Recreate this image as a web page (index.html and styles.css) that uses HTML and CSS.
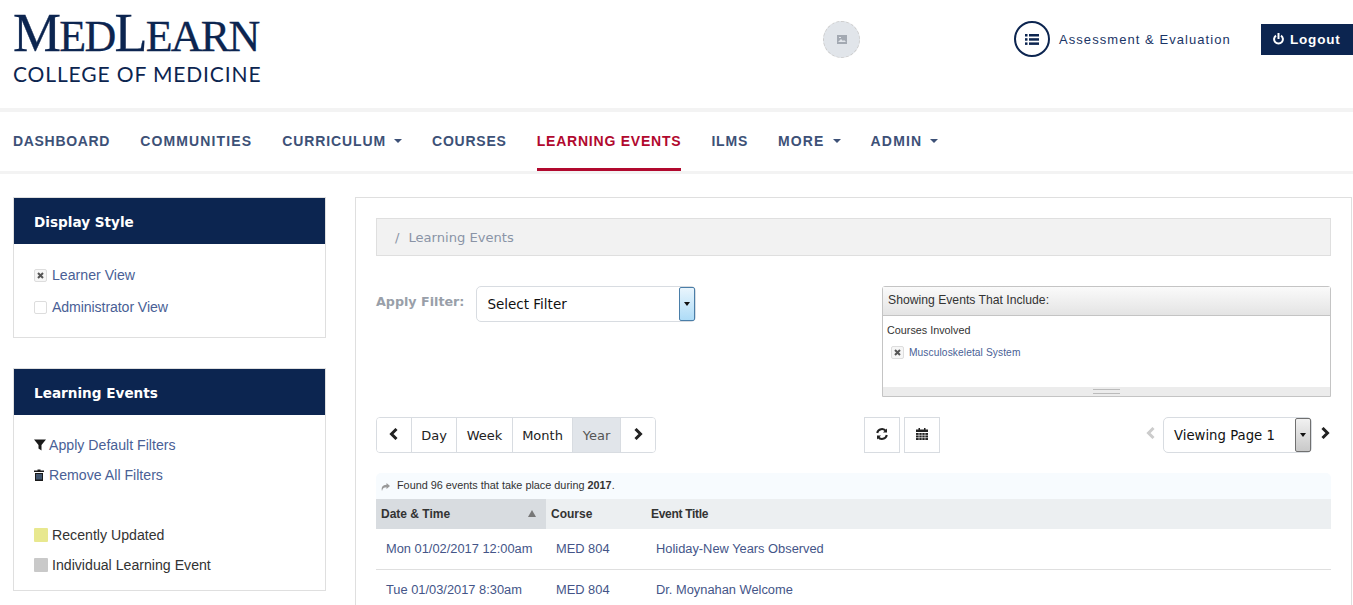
FILE: index.html
```html
<!DOCTYPE html>
<html lang="en">
<head>
<meta charset="utf-8">
<title>MedLearn - Learning Events</title>
<link rel="stylesheet" href="styles.css">
</head>
<body>
<header class="top">
  <div class="logo">
    <div class="logo-main"><span class="cap">M</span>ED<span class="cap">L</span>EARN</div>
    <div class="logo-sub">COLLEGE OF MEDICINE</div>
  </div>
  <div class="avatar">
    <svg width="10" height="9" viewBox="0 0 10 9"><rect width="10" height="9" fill="#a3a9b2"/><path d="M1 7l3-3 2 2 1-1 2 2z" fill="#e1e5ea"/><rect x="2" y="2" width="2" height="1" fill="#e1e5ea"/></svg>
  </div>
  <div class="top-right">
    <div class="circle-btn">
      <svg width="14" height="11" viewBox="0 0 14 11" fill="#0c2550"><rect width="2.5" height="2.5"/><rect y="4.2" width="2.5" height="2.5"/><rect y="8.4" width="2.5" height="2.5"/><rect x="4" width="10" height="2.5"/><rect x="4" y="4.2" width="10" height="2.5"/><rect x="4" y="8.4" width="10" height="2.5"/></svg>
    </div>
    <a class="assess">Assessment &amp; Evaluation</a>
    <a class="logout">
      <svg width="11" height="12" viewBox="0 0 11 12" fill="none" stroke="#fff" stroke-width="2"><path d="M3 2.6a4.4 4.4 0 1 0 5 0"/><path d="M5.5 0v6"/></svg>
      Logout
    </a>
  </div>
</header>
<nav class="nav">
  <a class="nav-item narrow">DASHBOARD</a>
  <a class="nav-item wide">COMMUNITIES</a>
  <a class="nav-item mid">CURRICULUM<i class="caret"></i></a>
  <a class="nav-item">COURSES</a>
  <a class="nav-item active">LEARNING EVENTS</a>
  <a class="nav-item">ILMS</a>
  <a class="nav-item wide">MORE<i class="caret"></i></a>
  <a class="nav-item wide">ADMIN<i class="caret"></i></a>
</nav>
<div class="page">
  <aside class="side">
    <section class="card">
      <h2 class="card-head">Display Style</h2>
      <div class="card-body display-body">
        <div class="row"><span class="check on"><svg width="7" height="7" viewBox="0 0 7 7"><path d="M1 1l5 5M6 1L1 6" stroke="#555" stroke-width="2"/></svg></span><a>Learner View</a></div>
        <div class="row"><span class="check"></span><a class="admin">Administrator View</a></div>
      </div>
    </section>
    <section class="card">
      <h2 class="card-head">Learning Events</h2>
      <div class="card-body events-body">
        <div class="row tight icon-row"><svg width="12" height="12" viewBox="0 0 12 12"><path d="M0 0.5h12L7.5 6v5.5L4.500 9.500V6z" fill="#1a1a1a"/></svg><a>Apply Default Filters</a></div>
        <div class="row tight"><svg width="10" height="12" viewBox="0 0 10 12" class="trash"><path d="M3.5 1.5V.5h3v1H10v1.5H0V1.5zM1 4h8v8H1z" fill="#1a1a1a"/><path d="M3 5v5.5M5 5v5.5M7 5v5.5" stroke="#6b93c4"/></svg><a>Remove All Filters</a></div>
        <div class="legend">
          <div class="row tight"><span class="swatch yellow"></span><span>Recently Updated</span></div>
          <div class="row tight"><span class="swatch grey"></span><span>Individual Learning Event</span></div>
        </div>
      </div>
    </section>
  </aside>
  <main class="main">
    <div class="crumb"><span class="slash">/</span>Learning Events</div>
    <div class="filters">
      <div class="filter-left">
        <span class="filter-label">Apply Filter:</span>
        <div class="select filter-select">
          <span>Select Filter</span>
          <span class="sel-btn blue"><i class="mini-caret"></i></span>
        </div>
      </div>
      <div class="include">
        <div class="include-head">Showing Events That Include:</div>
        <div class="include-body">
          <div class="include-title">Courses Involved</div>
          <div class="include-item"><span class="check on"><svg width="7" height="7" viewBox="0 0 7 7"><path d="M1 1l5 5M6 1L1 6" stroke="#555" stroke-width="2"/></svg></span><a>Musculoskeletal System</a></div>
        </div>
        <div class="include-foot"><i></i></div>
      </div>
    </div>
    <div class="toolbar">
      <div class="btn-group">
        <button class="seg arrow"><svg width="10" height="12" viewBox="0 0 10 12"><path d="M7.5 1L2.5 6l5 5" fill="none" stroke="#222" stroke-width="3"/></svg></button>
        <button class="seg day">Day</button>
        <button class="seg week">Week</button>
        <button class="seg month">Month</button>
        <button class="seg year">Year</button>
        <button class="seg arrow last"><svg width="10" height="12" viewBox="0 0 10 12"><path d="M2.5 1l5 5-5 5" fill="none" stroke="#222" stroke-width="3"/></svg></button>
      </div>
      <div class="mid-btns">
        <button class="square"><svg width="12" height="12" viewBox="0 0 12 12" fill="none" stroke="#222" stroke-width="2"><path d="M1.2 5A4.9 4.9 0 0 1 10 3.2"/><path d="M10.8 7A4.9 4.9 0 0 1 2 8.8"/><path d="M11 0.5V4.5H7" fill="#222" stroke="none"/><path d="M1 11.5V7.5H5" fill="#222" stroke="none"/></svg></button>
        <button class="square"><svg width="12" height="12" viewBox="0 0 12 12"><path d="M0 1.5h2.5V0h1.500v1.500h4V0h1.500v1.500H12V4H0zM0 5h12v7H0z" fill="#222"/><path d="M0 7.300h12M0 9.600h12M3 5v7M6 5v7M9 5v7" stroke="#fff" stroke-width=".6"/></svg></button>
      </div>
      <div class="pager">
        <svg width="10" height="12" viewBox="0 0 10 12"><path d="M7.500 1L2.500 6l5 5" fill="none" stroke="#ccc" stroke-width="3"/></svg>
        <div class="select page-select">
          <span>Viewing Page 1</span>
          <span class="sel-btn grey-btn"><i class="mini-caret"></i></span>
        </div>
        <svg class="next" width="10" height="12" viewBox="0 0 10 12"><path d="M2.500 1l5 5-5 5" fill="none" stroke="#222" stroke-width="3"/></svg>
      </div>
    </div>
    <div class="found">
      <svg width="9" height="8" viewBox="0 0 9 8"><path d="M5.500 0L9 3 5.500 6V4.200C3 4.200 1.500 5 1 8 0 4.500 1.500 2 5.500 1.800z" fill="#999"/></svg>
      <span>Found 96 events that take place during <b>2017</b>.</span>
    </div>
    <table class="events">
      <thead>
        <tr><th class="sorted">Date &amp; Time<i class="sort-up"></i></th><th class="c2">Course</th><th class="title-head">Event Title</th></tr>
      </thead>
      <tbody>
        <tr><td class="c1">Mon 01/02/2017 12:00am</td><td class="c2">MED 804</td><td>Holiday-New Years Observed</td></tr>
        <tr><td class="c1">Tue 01/03/2017 8:30am</td><td class="c2">MED 804</td><td>Dr. Moynahan Welcome</td></tr>
      </tbody>
    </table>
  </main>
</div>
</body>
</html>
```

FILE: styles.css
```css
html, body { margin: 0; height: 605px; overflow: hidden; background: #fff; }
body { font-family: "Liberation Sans", Arial, sans-serif; font-size: 14px; color: #333; }
a { color: #3d5186; }
button { font: inherit; background: #fff; cursor: pointer; padding: 0; }

.top { height: 108px; display: flex; align-items: flex-start; position: relative; }
.logo { margin: 10px 0 0 13px; width: 800px; color: #0c2550; }
.logo-main { font-family: "Liberation Serif", serif; font-size: 44px; line-height: 46px; letter-spacing: -1.75px; height: 46px; -webkit-text-stroke: .3px #0c2550; white-space: nowrap; }
.logo-main .cap { font-size: 54px; }
.logo-sub { font-family: Lato, sans-serif; font-size: 21px; line-height: 24px; margin-top: 6px; letter-spacing: .87px; }
.avatar { position: absolute; left: 823px; top: 21px; width: 35px; height: 35px; border-radius: 50%; background: #e1e5ea; border: 1px dashed #ccc; display: flex; align-items: center; justify-content: center; }
.top-right { margin-left: auto; margin-top: 21px; display: flex; align-items: center; }
.circle-btn { width: 32px; height: 32px; border: 2px solid #0c2550; border-radius: 50%; display: flex; align-items: center; justify-content: center; }
.assess { margin-left: 9px; font-size: 13px; letter-spacing: 1.06px; color: #1a3566; width: 202px; }
.logout { width: 92px; height: 31px; background: #0c2550; color: #fff; font-weight: bold; font-size: 13.5px; letter-spacing: .8px; display: flex; align-items: center; gap: 6px; padding-left: 12px; box-sizing: border-box; }

.nav { height: 59px; border-top: 4px solid #f3f3f3; border-bottom: 3px solid #f3f3f3; display: flex; padding-left: 13px; gap: 30px; }
.nav-item { height: 59px; box-sizing: border-box; display: flex; align-items: center; font-size: 14px; font-weight: bold; letter-spacing: .78px; color: #3d5177; padding-bottom: 1px; }
.nav-item.narrow { letter-spacing: .68px; }
.nav-item.mid { letter-spacing: .88px; }
.nav-item.wide { letter-spacing: 1.15px; }
.nav-item.active { color: #b1092e; border-bottom: 3px solid #b1092e; padding-top: 2px; padding-bottom: 0; }
.caret { display: inline-block; width: 0; height: 0; border: 4px solid transparent; border-top-color: #3d5177; border-bottom: 0; margin-left: 8px; }

.page { display: flex; align-items: flex-start; padding: 23px 0 0 13px; gap: 29px; }
.side { width: 313px; flex: none; display: flex; flex-direction: column; gap: 30px; }
.card { border: 1px solid #dfdfdf; }
.card-head { margin: 0; height: 46px; line-height: 48px; background: #0c2550; color: #fff; font-family: "DejaVu Sans", Verdana, sans-serif; font-size: 13.6px; font-weight: bold; padding-left: 20px; }
.card-body { padding: 0 20px; font-size: 14.15px; }
.row { display: flex; align-items: center; gap: 5px; height: 32px; }
.row a { color: #4a5f96; }
.row a.admin { letter-spacing: -.1px; }
.row.tight { height: 30px; gap: 4px; }
.row.icon-row { gap: 3px; }
.display-body { padding-top: 15px; padding-bottom: 14px; }
.events-body { padding-top: 15px; padding-bottom: 10px; }
.legend { margin-top: 30px; }
.legend .row { gap: 4px; color: #333; }
.trash { margin-right: 1px; }
.check { width: 11px; height: 11px; border: 1px solid #ddd; border-radius: 2px; display: flex; align-items: center; justify-content: center; box-sizing: content-box; flex: none; }
.check.on { background: #f6f6f6; }
.swatch { width: 14px; height: 14px; border-radius: 1px; flex: none; }
.yellow { background: #e8e88f; }
.grey { background: #c9c9c9; }

.main { width: 955px; height: 500px; border: 1px solid #dfdfdf; padding: 20px 20px 0; flex: none; }
.crumb { height: 36px; line-height: 38px; background: #f2f2f2; border: 1px solid #dfdfdf; font-family: "DejaVu Sans", Verdana, sans-serif; font-size: 13.1px; color: #8a94a6; padding-left: 18px; }
.slash { margin-right: 9px; }
.filters { display: flex; justify-content: space-between; align-items: flex-start; margin-top: 30px; }
.filter-left { display: flex; align-items: flex-start; gap: 12px; }
.filter-label { font-family: "DejaVu Sans", Verdana, sans-serif; font-weight: bold; font-size: 12.7px; color: #999fa9; margin-top: 8px; }
.select { position: relative; border: 1px solid #d8dce1; border-radius: 5px; background: #fff; font-family: "DejaVu Sans", Verdana, sans-serif; font-size: 13.5px; color: #111; display: flex; align-items: center; box-sizing: border-box; padding-left: 10px; }
.filter-select { width: 220px; height: 36px; }
.page-select { width: 149px; height: 36px; font-size: 13.25px; }
.sel-btn { position: absolute; right: 0; top: 0; bottom: 0; width: 16px; display: flex; align-items: center; justify-content: center; border-radius: 2px; box-sizing: border-box; }
.blue { background: linear-gradient(#e9f5fd, #aedcf7); border: 1px solid #4a7ea8; }
.grey-btn { background: linear-gradient(#f1f1f1, #c9c9c9); border: 1px solid #707070; }
.mini-caret { width: 0; height: 0; border: 3.5px solid transparent; border-top: 4px solid #111; border-bottom: 0; }

.include { width: 447px; height: 109px; border: 1px solid #c4c4c4; border-radius: 3px 3px 0 0; display: flex; flex-direction: column; }
.include-head { height: 28px; line-height: 27px; font-size: 12.2px; color: #333; padding-left: 5px; background: linear-gradient(#fafafa, #e4e4e4); border-bottom: 1px solid #c4c4c4; flex: none; }
.include-body { flex: 1; padding-left: 4px; }
.include-title { font-size: 10.8px; color: #333; margin-top: 8px; line-height: 12px; }
.include-item { display: flex; align-items: center; gap: 5px; font-size: 10.2px; margin: 10px 0 0 4px; }
.include-item a { color: #4a5f96; letter-spacing: .1px; }
.include-foot { height: 9px; background: #ececec; display: flex; justify-content: center; align-items: center; flex: none; }
.include-foot i { width: 27px; height: 3px; border-top: 1px solid #bbb; border-bottom: 1px solid #bbb; }

.toolbar { display: flex; align-items: flex-start; margin-top: 20px; height: 36px; position: relative; }
.btn-group { display: flex; height: 36px; border: 1px solid #d8dce1; border-radius: 4px; box-sizing: border-box; font-family: "DejaVu Sans", Verdana, sans-serif; font-size: 13px; overflow: hidden; }
.seg { border: 0; border-right: 1px solid #d8dce1; color: #222; font-size: 13px; font-family: "DejaVu Sans", Verdana, sans-serif; height: 100%; }
.seg.arrow { width: 35px; display: flex; align-items: center; justify-content: center; padding-bottom: 3px; }
.seg.last { border-right: 0; width: 34px; }
.day { width: 45px; }
.week { width: 56px; }
.month { width: 60px; }
.year { width: 48px; background: #e1e5ea; color: #555; }
.mid-btns { display: flex; gap: 4px; margin-left: 208px; }
.square { width: 36px; height: 36px; border: 1px solid #d8dce1; display: flex; align-items: center; justify-content: center; padding-bottom: 2px; }
.pager { margin-left: auto; display: flex; align-items: flex-start; gap: 7px; padding-right: 1px; }
.pager svg { margin-top: 10px; }
.pager .next { margin-left: 1px; }
.found { margin-top: 20px; height: 26px; background: #f7fbfe; border-radius: 5px 5px 0 0; display: flex; align-items: center; gap: 7px; padding: 0 0 2px 5px; box-sizing: border-box; font-size: 10.85px; color: #333; }
.found svg { margin-top: 3px; }
.events { width: 100%; border-collapse: collapse; font-size: 12.85px; table-layout: fixed; }
.events th { height: 30px; text-align: left; background: #eceff1; padding: 0 0 0 5px; font-weight: bold; font-size: 12px; color: #333; box-sizing: border-box; }
.events th.sorted { width: 170px; background: #d8dce0; position: relative; }
.events th.c2 { width: 100px; }
.events th.title-head { letter-spacing: -.3px; }
.sort-up { position: absolute; right: 10px; top: 11px; width: 0; height: 0; border: 4.5px solid transparent; border-bottom: 7px solid #777; border-top: 0; }
.events td { height: 40px; padding: 0 0 1px 10px; border-bottom: 1px solid #dfdfdf; color: #445588; box-sizing: border-box; }
.events tr + tr td { height: 41px; padding-bottom: 0; }
```
